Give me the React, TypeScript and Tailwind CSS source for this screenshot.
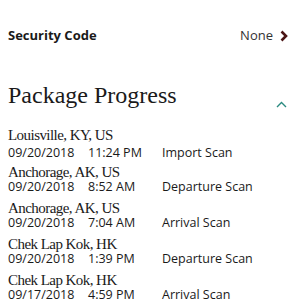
const rows = [
  { place: 'Louisville, KY, US', date: '09/20/2018', time: '11:24 PM', event: 'Import Scan' },
  { place: 'Anchorage, AK, US', date: '09/20/2018', time: '8:52 AM', event: 'Departure Scan' },
  { place: 'Anchorage, AK, US', date: '09/20/2018', time: '7:04 AM', event: 'Arrival Scan' },
  { place: 'Chek Lap Kok, HK', date: '09/20/2018', time: '1:39 PM', event: 'Departure Scan' },
  { place: 'Chek Lap Kok, HK', date: '09/17/2018', time: '4:59 PM', event: 'Arrival Scan' },
]

export default function App(): React.ReactElement {
  return (
    <div className="w-[300px] h-[300px] overflow-hidden bg-white text-[#1a1a1a] font-['Open_Sans',sans-serif]">
      {/* Security code row */}
      <div className="flex items-center justify-between pl-2 pr-[11px] pt-[25px] h-[46px]">
        <span className="text-[13px] font-bold">Security Code</span>
        <div className="flex items-center gap-[6px]">
          <span className="text-[13px] text-[#333]">None</span>
          <svg width="10" height="12" viewBox="0 0 10 12">
            <path d="M2.5 1.5 L7 6 L2.5 10.5" fill="none" stroke="#4a1414" strokeWidth="2.6" />
          </svg>
        </div>
      </div>

      {/* Package progress header */}
      <div className="flex items-end justify-between pl-2 pr-[13px] mt-[35px]">
        <h2 className="font-['Liberation_Serif',serif] text-[24px] leading-[28px]">Package Progress</h2>
        <svg width="11" height="7" viewBox="0 0 11 7" className="mb-[1px]">
          <path d="M1 6 L5.5 1.5 L10 6" fill="none" stroke="#2a8a80" strokeWidth="1.4" />
        </svg>
      </div>

      {/* Scan history */}
      <div className="flex flex-col pl-2 mt-[16px]">
        {rows.map((r, i) => (
          <div key={i} className={i === 0 ? 'flex flex-col' : i === 1 ? 'flex flex-col mt-[2px]' : 'flex flex-col mt-[4px]'}>
            <div className="pt-[2px] font-['Liberation_Serif',serif] text-[15px] leading-[16px] tracking-[-0.55px]">{r.place}</div>
            <div className={i === 0 ? 'flex text-[12.5px] leading-[14px] mt-[3px]' : 'flex text-[12.5px] leading-[14px]'}>
              <span className="w-[80px]">{r.date}</span>
              <span className="w-[74px]">{r.time}</span>
              <span>{r.event}</span>
            </div>
          </div>
        ))}
      </div>
    </div>
  )
}
